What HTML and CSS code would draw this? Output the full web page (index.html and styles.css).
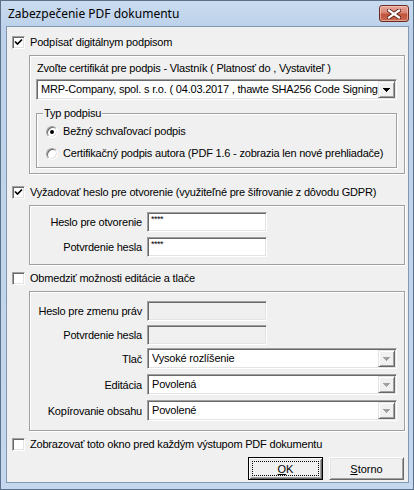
FILE: index.html
```html
<!DOCTYPE html>
<html lang="sk">

<head>
    <meta charset="UTF-8">
    <meta name="viewport" content="width=device-width, initial-scale=1.0">
    <title>Zabezpečenie PDF dokumentu</title>
    <link rel="stylesheet" href="styles.css">
</head>

<body>
    <div class="window">
        <div class="titlebar">
            <span class="title">Zabezpečenie PDF dokumentu</span>
            <span class="close">
                <svg width="14" height="10" viewBox="0 0 14 10">
                    <path d="M2 1.5 L12 8.5 M12 1.5 L2 8.5" stroke="#5a1f14" stroke-width="4" stroke-linecap="square" />
                    <path d="M2 1.5 L12 8.5 M12 1.5 L2 8.5" stroke="#fff" stroke-width="2.2" stroke-linecap="square" />
                </svg>
            </span>
        </div>

        <div class="client">
            <div class="check-row first">
                <span class="check">
                    <svg width="9" height="9" viewBox="0 0 9 9"><path d="M1 3.5 L3.5 6 L8 1.5" stroke="#000" stroke-width="1.7" fill="none" /></svg>
                </span>
                <span class="label">Podpísať digitálnym podpisom</span>
            </div>

            <div class="panel sign-panel">
                <div class="hint">Zvoľte certifikát pre podpis - Vlastník ( Platnosť do , Vystaviteľ )</div>
                <div class="combo cert">
                    <span class="combo-text">MRP-Company, spol. s r.o. ( 04.03.2017 , thawte SHA256 Code Signing CA )</span>
                    <span class="combo-btn"><svg width="7" height="4" shape-rendering="crispEdges"><path d="M0 0h7v1h-1v1h-1v1h-1v1h-1v-1h-1v-1h-1v-1h-1z" fill="#000" /></svg></span>
                </div>
                <div class="group">
                    <div class="group-title"><span>Typ podpisu</span></div>
                    <div class="radio-row"><span class="radio on"></span><span class="label">Bežný schvaľovací podpis</span></div>
                    <div class="radio-row second"><span class="radio"></span><span class="label">Certifikačný podpis autora (PDF 1.6 - zobrazia len nové prehliadače)</span></div>
                </div>
            </div>

            <div class="check-row after-sign">
                <span class="check">
                    <svg width="9" height="9" viewBox="0 0 9 9"><path d="M1 3.5 L3.5 6 L8 1.5" stroke="#000" stroke-width="1.7" fill="none" /></svg>
                </span>
                <span class="label">Vyžadovať heslo pre otvorenie (využiteľné pre šifrovanie z dôvodu GDPR)</span>
            </div>

            <div class="panel open-panel">
                <div class="form-row">
                    <span class="form-label">Heslo pre otvorenie</span>
                    <span class="field">****</span>
                </div>
                <div class="form-row gap5">
                    <span class="form-label">Potvrdenie hesla</span>
                    <span class="field">****</span>
                </div>
            </div>

            <div class="check-row after-panel">
                <span class="check"></span>
                <span class="label">Obmedziť možnosti editácie a tlače</span>
            </div>

            <div class="panel rights-panel">
                <div class="form-row">
                    <span class="form-label">Heslo pre zmenu práv</span>
                    <span class="field off"></span>
                </div>
                <div class="form-row gap4">
                    <span class="form-label">Potvrdenie hesla</span>
                    <span class="field off"></span>
                </div>
                <div class="form-row gap3">
                    <span class="form-label">Tlač</span>
                    <div class="combo wide">
                        <span class="combo-text">Vysoké rozlíšenie</span>
                        <span class="combo-btn"><svg width="7" height="4" shape-rendering="crispEdges"><path d="M0 0h7v1h-1v1h-1v1h-1v1h-1v-1h-1v-1h-1v-1h-1z" fill="#a0a0a0" /></svg></span>
                    </div>
                </div>
                <div class="form-row gap5">
                    <span class="form-label">Editácia</span>
                    <div class="combo wide">
                        <span class="combo-text">Povolená</span>
                        <span class="combo-btn"><svg width="7" height="4" shape-rendering="crispEdges"><path d="M0 0h7v1h-1v1h-1v1h-1v1h-1v-1h-1v-1h-1v-1h-1z" fill="#a0a0a0" /></svg></span>
                    </div>
                </div>
                <div class="form-row gap5">
                    <span class="form-label">Kopírovanie obsahu</span>
                    <div class="combo wide">
                        <span class="combo-text">Povolené</span>
                        <span class="combo-btn"><svg width="7" height="4" shape-rendering="crispEdges"><path d="M0 0h7v1h-1v1h-1v1h-1v1h-1v-1h-1v-1h-1v-1h-1z" fill="#a0a0a0" /></svg></span>
                    </div>
                </div>
            </div>

            <div class="check-row after-panel">
                <span class="check"></span>
                <span class="label">Zobrazovať toto okno pred každým výstupom PDF dokumentu</span>
            </div>

            <div class="buttons">
                <button class="btn default"><span class="focus"><u>O</u>K</span></button>
                <button class="btn"><span class="focus none"><u>S</u>torno</span></button>
            </div>
        </div>
    </div>
</body>

</html>
```

FILE: styles.css
```css
* {
    box-sizing: border-box;
}

body {
    margin: 0;
    font-family: "Liberation Sans", Arial, sans-serif;
    font-size: 11px;
    letter-spacing: -0.2px;
    color: #000;
    background: #fff;
}

/* window frame */
.window {
    width: 414px;
    height: 490px;
    display: flex;
    flex-direction: column;
    padding: 0 4px 6px 5px;
    border: 1px solid #5d718a;
    background: linear-gradient(#c9dbf0, #bdd2ea 26px, #c4d7ee);
}

.titlebar {
    height: 25px;
    display: flex;
    align-items: flex-start;
    justify-content: space-between;
}

.title {
    padding: 5px 0 0 2px;
    font-family: "Noto Sans", sans-serif;
    font-size: 12px;
    line-height: 16px;
    letter-spacing: 0;
}

.close {
    width: 30px;
    height: 17px;
    margin-top: 4px;
    display: flex;
    align-items: center;
    justify-content: center;
    border: 1px solid #6b2c22;
    border-radius: 3px;
    background: linear-gradient(#e8a89b, #d98574 45%, #c3533c 55%, #c96a52);
    box-shadow: inset 0 0 0 1px rgba(255, 220, 210, 0.5);
}

.client {
    flex: 1;
    padding: 9px 4px 0 5px;
    background: #f0f0f0;
    border: 1px solid #8298b1;
}

/* checkboxes */
.check-row {
    display: flex;
    align-items: center;
    height: 13px;
    line-height: 13px;
    white-space: nowrap;
}

.check-row .label {
    margin-left: 5px;
}

.check {
    width: 13px;
    height: 13px;
    flex: none;
    display: flex;
    align-items: center;
    justify-content: center;
    background: #fff;
    border: 1px solid;
    border-color: #a0a0a0 #fff #fff #a0a0a0;
    box-shadow: inset 1px 1px #696969, inset -1px -1px #e3e3e3;
}

.after-sign {
    margin-top: 12px;
}

.after-panel {
    margin-top: 7px;
}

/* etched panels */
.panel {
    width: 376px;
    margin: 6px 0 0 17px;
    border: 1px solid #a0a0a0;
    box-shadow: inset 1px 1px #fff, 1px 1px #fff;
}

.sign-panel {
    padding: 6px 7px 5px 6px;
}

.open-panel {
    padding: 6px 0 7px 0;
}

.rights-panel {
    padding: 9px 0 9px 0;
}

.hint {
    padding-left: 1px;
    height: 13px;
    line-height: 13px;
    white-space: nowrap;
}

/* combo boxes */
.combo {
    height: 21px;
    display: flex;
    background: #fff;
    border: 1px solid;
    border-color: #a0a0a0 #fff #fff #a0a0a0;
    box-shadow: inset 1px 1px #696969, inset -1px -1px #e3e3e3;
    padding: 1px;
}

.combo.cert {
    margin-top: 4px;
}

.combo.wide {
    width: 250px;
}

.combo-text {
    flex: 1;
    overflow: hidden;
    white-space: nowrap;
    padding-left: 3px;
    line-height: 17px;
}

.combo-btn {
    width: 17px;
    flex: none;
    display: flex;
    align-items: center;
    justify-content: center;
    background: #f0f0f0;
    border: 1px solid;
    border-color: #e3e3e3 #696969 #696969 #e3e3e3;
    box-shadow: inset 1px 1px #fff, inset -1px -1px #a0a0a0;
}

/* group box */
.group {
    margin-top: 13px;
    padding: 0 0 7px 9px;
    border: 1px solid #a0a0a0;
    box-shadow: inset 1px 1px #fff, 1px 1px #fff;
}

.group-title {
    margin: -7px 0 0 -3px;
    height: 13px;
    line-height: 13px;
}

.group-title span {
    padding: 0 1px;
    background: #f0f0f0;
}

.radio-row {
    margin-top: 5px;
    display: flex;
    align-items: center;
    height: 13px;
    line-height: 13px;
    white-space: nowrap;
}

.radio-row.second {
    margin-top: 9px;
}

.radio-row .label {
    margin-left: 5px;
}

.radio {
    width: 12px;
    height: 12px;
    flex: none;
    display: flex;
    align-items: center;
    justify-content: center;
    border-radius: 50%;
    background: #fff;
    border: 1px solid;
    border-color: #a0a0a0 #fff #fff #a0a0a0;
    box-shadow: inset 1px 1px #696969, inset -1px -1px #e3e3e3;
}

.radio.on::after {
    content: "";
    width: 4px;
    height: 4px;
    border-radius: 50%;
    background: #000;
}

/* label + field rows */
.form-row {
    display: flex;
    align-items: center;
}

.gap3 {
    margin-top: 3px;
}

.gap4 {
    margin-top: 4px;
}

.gap5 {
    margin-top: 5px;
}

.form-label {
    width: 112px;
    margin-right: 5px;
    text-align: right;
    white-space: nowrap;
}

.field {
    width: 120px;
    height: 20px;
    padding: 2px 3px;
    background: #fff;
    border: 1px solid;
    border-color: #a0a0a0 #fff #fff #a0a0a0;
    box-shadow: inset 1px 1px #696969, inset -1px -1px #e3e3e3;
    font-size: 9px;
    line-height: 9px;
    letter-spacing: -0.5px;
}

.field.off {
    background: #f0f0f0;
}

/* buttons */
.buttons {
    margin-top: 6px;
    display: flex;
    justify-content: flex-end;
    gap: 6px;
}

.btn {
    width: 75px;
    height: 23px;
    padding: 3px;
    display: flex;
    font-family: inherit;
    font-size: 11px;
    letter-spacing: 0;
    color: #000;
    background: #f0f0f0;
    border: 1px solid;
    border-color: #fff #696969 #696969 #fff;
    box-shadow: inset 1px 1px #e3e3e3, inset -1px -1px #a0a0a0;
}

.btn.default {
    border-color: #000;
    box-shadow: inset 1px 1px #fff, inset -1px -1px #696969, inset 2px 2px #e3e3e3, inset -2px -2px #a0a0a0;
}

.focus {
    flex: 1;
    display: flex;
    align-items: center;
    justify-content: center;
    border: 1px dotted #000;
}

.focus.none {
    border-color: transparent;
}
```
